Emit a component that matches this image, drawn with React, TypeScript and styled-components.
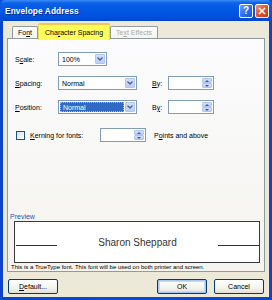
import React from 'react';
import styled, { createGlobalStyle, css } from 'styled-components';

const Global = createGlobalStyle`
  html, body { margin: 0; padding: 0; background: #ECE9D8; }
  body { font-family: "Liberation Sans", Arial, sans-serif; color: #000; }
  * { box-sizing: border-box; }
`;

const Window = styled.div`
  width: 272px;
  height: 300px;
  display: flex;
  flex-direction: column;
  background: #0A4BD6;
`;

const TitleBar = styled.div`
  height: 21px;
  flex: none;
  display: flex;
  align-items: center;
  justify-content: space-between;
  padding: 0 3px 0 5px;
  background: linear-gradient(to bottom, #3C8CF8 0%, #0C62E8 14%, #0257E4 45%, #0052DD 80%, #0044CC 100%);
  border-radius: 5px 5px 0 0;
`;

const Title = styled.div`
  font-family: "Liberation Sans", Arial, sans-serif;
  font-weight: bold;
  font-size: 8.3px;
  letter-spacing: 0.1px;
  color: #fff;
  text-shadow: 1px 1px 0 #0A2A8A;
`;

const CaptionButtons = styled.div`
  display: flex;
  gap: 2px;
`;

const CaptionButton = styled.div<{ $variant: 'help' | 'close' }>`
  width: 14px;
  height: 14px;
  border: 1px solid #fff;
  border-radius: 2px;
  display: flex;
  align-items: center;
  justify-content: center;
  ${(p) =>
    p.$variant === 'help'
      ? css`background: linear-gradient(135deg, #6FA2F8 0%, #2A6EEA 55%, #1B55D6 100%);`
      : css`background: linear-gradient(135deg, #F0936E 0%, #E0512A 55%, #C83A14 100%);`}
`;

const HelpGlyph = styled.span`
  color: #fff;
  font-weight: bold;
  font-size: 10px;
  line-height: 10px;
  font-family: "Liberation Sans", Arial, sans-serif;
`;

const Frame = styled.div`
  flex: 1;
  display: flex;
  padding: 0 3px 3px 3px;
  background: linear-gradient(to right, #0A44CF, #0A4BD6 50%, #0A44CF);
`;

const Client = styled.div`
  flex: 1;
  display: flex;
  flex-direction: column;
  background: #ECE9D8;
  padding: 2px 4px 0 4px;
`;

const TabStrip = styled.div`
  height: 15px;
  display: flex;
  align-items: flex-end;
  padding-left: 5px;
`;

const Tab = styled.div<{ $active?: boolean; $disabled?: boolean }>`
  font-size: 7px;
  display: flex;
  align-items: center;
  justify-content: center;
  border: 1px solid #919B9C;
  border-bottom: none;
  border-radius: 2px 2px 0 0;
  color: ${(p) => (p.$disabled ? '#ACA899' : '#000')};
  ${(p) =>
    p.$active
      ? css`
          height: 17px;
          margin-bottom: -2px;
          position: relative;
          z-index: 1;
          background: #FFFF5A;
          border-color: #E6D94A;
          border-top: 2px solid #F2C94C;
          padding: 0 6px;
        `
      : css`
          height: 12px;
          background: linear-gradient(#FFFFFF, #F3F3EF);
          padding: 0 5px;
        `}
`;

const Panel = styled.div`
  height: 234px;
  flex: none;
  border: 1px solid #919B9C;
  background: linear-gradient(#FCFCFE, #F4F3EE);
  display: flex;
  flex-direction: column;
  padding: 13px 0 0 0;
`;

const Form = styled.div`
  display: flex;
  flex-direction: column;
  gap: 10px;
  padding-left: 7px;
`;

const Row = styled.div`
  display: flex;
  align-items: center;
  height: 14px;
`;

const Label = styled.div<{ $w: number; $ml?: number }>`
  width: ${(p) => p.$w}px;
  margin-left: ${(p) => p.$ml ?? 0}px;
  font-size: 7px;
  white-space: nowrap;
`;

const U = styled.span`
  text-decoration: underline;
`;

const Combo = styled.div<{ $w: number }>`
  width: ${(p) => p.$w}px;
  height: 14px;
  border: 1px solid #7F9DB9;
  background: #fff;
  display: flex;
`;

const ComboValue = styled.div<{ $selected?: boolean }>`
  flex: 1;
  font-size: 7px;
  display: flex;
  align-items: center;
  padding-left: 2px;
  margin: 1px;
  ${(p) =>
    p.$selected &&
    css`
      background: #316AC5;
      color: #fff;
      border: 1px dotted #9DB4E0;
    `}
`;

const DropButton = styled.div`
  width: 10px;
  margin: 1px 1px 1px 0;
  background: linear-gradient(#D4E0FC, #B9CDF8);
  border: 1px solid #B0C4F2;
  border-radius: 1px;
  display: flex;
  align-items: center;
  justify-content: center;
`;

const Spin = styled.div<{ $w: number }>`
  width: ${(p) => p.$w}px;
  height: 14px;
  border: 1px solid #7F9DB9;
  background: #fff;
  display: flex;
  justify-content: flex-end;
`;

const SpinButtons = styled.div`
  width: 10px;
  margin: 1px 1px 1px 0;
  display: flex;
  flex-direction: column;
`;

const SpinHalf = styled.div`
  flex: 1;
  background: linear-gradient(#D4E0FC, #B9CDF8);
  border: 1px solid #B0C4F2;
  border-radius: 1px;
  display: flex;
  align-items: center;
  justify-content: center;
`;

const KerningRow = styled.div`
  display: flex;
  align-items: center;
  height: 14px;
  margin-top: 14px;
  padding-left: 8px;
`;

const Check = styled.div`
  width: 9px;
  height: 9px;
  border: 1px solid #1C5180;
  background: linear-gradient(135deg, #DCDCD7, #FFFFFF);
  margin-right: 5px;
`;

const Spacer = styled.div`
  flex: 1;
`;

const PreviewLabel = styled.div`
  font-size: 7px;
  color: #2758C4;
  margin-left: 2px;
  height: 8px;
  line-height: 8px;
`;

const PreviewBox = styled.div`
  height: 42px;
  margin: 0 4px 0 6px;
  border: 1px solid #3A3A3A;
  background: #fff;
  display: flex;
  align-items: center;
  justify-content: space-between;
  padding: 0 0 0 1px;
`;

const PreviewLine = styled.div`
  width: 41px;
  height: 1px;
  background: #333;
  margin-top: 6px;
`;

const PreviewText = styled.div`
  font-family: "Liberation Sans", Arial, sans-serif;
  font-size: 10px;
  color: #333;
`;

const Info = styled.div`
  font-size: 6px;
  height: 8px;
  line-height: 8px;
  margin-left: 3px;
  white-space: nowrap;
`;

const Footer = styled.div`
  flex: 1;
  display: flex;
  align-items: flex-start;
  padding: 7px 1px 0 1px;
`;

const PushButton = styled.div<{ $default?: boolean }>`
  width: 50px;
  height: 15px;
  border: 1px solid #003C74;
  border-radius: 2px;
  background: linear-gradient(#FFFFFF 0%, #F4F3EE 60%, #E2DFD5 100%);
  font-size: 7px;
  display: flex;
  align-items: center;
  justify-content: center;
  ${(p) =>
    p.$default &&
    css`
      box-shadow: inset 0 0 0 1px #A9C6F5, inset 0 0 0 2px #C6D9FA;
    `}
`;

const ButtonGap = styled.div<{ $w?: number }>`
  ${(p) => (p.$w ? `width: ${p.$w}px;` : 'flex: 1;')}
`;

const Chevron = () => (
  <svg width="6" height="4" viewBox="0 0 6 4">
    <path d="M0.5 0.5 L3 3 L5.5 0.5" fill="none" stroke="#4D6185" strokeWidth="1.3" />
  </svg>
);

const Tri = ({ up }: { up?: boolean }) => (
  <svg width="4" height="2" viewBox="0 0 4 2">
    <path d={up ? 'M0 2 L2 0 L4 2 Z' : 'M0 0 L2 2 L4 0 Z'} fill="#4D6185" />
  </svg>
);

const SpinField = ({ w }: { w: number }) => (
  <Spin $w={w}>
    <SpinButtons>
      <SpinHalf>
        <Tri up />
      </SpinHalf>
      <SpinHalf>
        <Tri />
      </SpinHalf>
    </SpinButtons>
  </Spin>
);

const ComboField = ({ w, value, selected }: { w: number; value: string; selected?: boolean }) => (
  <Combo $w={w}>
    <ComboValue $selected={selected}>{value}</ComboValue>
    <DropButton>
      <Chevron />
    </DropButton>
  </Combo>
);

export default function App() {
  return (
    <>
      <Global />
      <Window>
        <TitleBar>
          <Title>Envelope Address</Title>
          <CaptionButtons>
            <CaptionButton $variant="help">
              <HelpGlyph>?</HelpGlyph>
            </CaptionButton>
            <CaptionButton $variant="close">
              <svg width="8" height="8" viewBox="0 0 8 8">
                <path d="M1 1 L7 7 M7 1 L1 7" stroke="#fff" strokeWidth="1.6" />
              </svg>
            </CaptionButton>
          </CaptionButtons>
        </TitleBar>
        <Frame>
          <Client>
            <TabStrip>
              <Tab>
                Fo<U>n</U>t
              </Tab>
              <Tab $active>
                Cha<U>r</U>acter Spacing
              </Tab>
              <Tab $disabled>Te<U>x</U>t Effects</Tab>
            </TabStrip>
            <Panel>
              <Form>
                <Row>
                  <Label $w={43}>
                    S<U>c</U>ale:
                  </Label>
                  <ComboField w={49} value="100%" />
                </Row>
                <Row>
                  <Label $w={43}>
                    <U>S</U>pacing:
                  </Label>
                  <ComboField w={79} value="Normal" />
                  <Label $w={16} $ml={15}>
                    <U>B</U>y:
                  </Label>
                  <SpinField w={46} />
                </Row>
                <Row>
                  <Label $w={43}>
                    <U>P</U>osition:
                  </Label>
                  <ComboField w={79} value="Normal" selected />
                  <Label $w={16} $ml={15}>
                    B<U>y</U>:
                  </Label>
                  <SpinField w={46} />
                </Row>
              </Form>
              <KerningRow>
                <Check />
                <Label $w={70}>
                  <U>K</U>erning for fonts:
                </Label>
                <SpinField w={46} />
                <Label $w={80} $ml={8}>
                  P<U>o</U>ints and above
                </Label>
              </KerningRow>
              <Spacer />
              <PreviewLabel>Preview</PreviewLabel>
              <PreviewBox>
                <PreviewLine />
                <PreviewText>Sharon Sheppard</PreviewText>
                <PreviewLine />
              </PreviewBox>
              <Info>This is a TrueType font. This font will be used on both printer and screen.</Info>
            </Panel>
            <Footer>
              <PushButton>
                <U>D</U>efault...
              </PushButton>
              <ButtonGap />
              <PushButton $default>OK</PushButton>
              <ButtonGap $w={7} />
              <PushButton>Cancel</PushButton>
            </Footer>
          </Client>
        </Frame>
      </Window>
    </>
  );
}
